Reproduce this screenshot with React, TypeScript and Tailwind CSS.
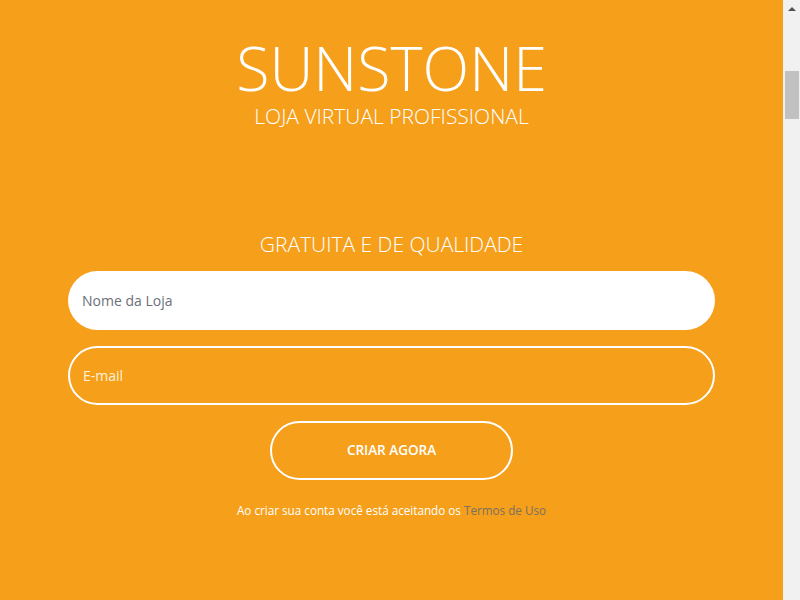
export default function App() {
  return (
    <div className="flex h-[600px] w-[800px] overflow-hidden bg-[#f59f1b] font-['Open_Sans',sans-serif]">
      <main className="flex flex-1 flex-col items-center text-white">
        <h1 className="mt-[35px] text-[61px] font-light leading-[66px]">SUNSTONE</h1>
        <p className="mt-[2px] text-[21px] font-light leading-[26px]">LOJA VIRTUAL PROFISSIONAL</p>

        <h2 className="mt-[102px] text-[21px] font-light leading-[26px]">GRATUITA E DE QUALIDADE</h2>

        <form className="mt-[14px] flex w-[647px] flex-col items-center gap-4" onSubmit={(e) => e.preventDefault()}>
          <input
            placeholder="Nome da Loja"
            className="h-[59px] w-full rounded-full bg-white px-[14px] text-[14px] text-gray-700 outline-none placeholder:text-[#6b6f7a]"
          />
          <input
            placeholder="E-mail"
            className="h-[59px] w-full rounded-full border-2 border-white bg-transparent px-[13px] text-[14px] text-white outline-none placeholder:text-[#fdf3dc]"
          />
          <button
            type="submit"
            className="h-[59px] w-[243px] rounded-full border-2 border-white text-[13.5px] font-semibold text-white"
          >
            CRIAR AGORA
          </button>
        </form>

        <p className="mt-[22px] text-[11.7px] leading-4">
          Ao criar sua conta você está aceitando os <a className="text-[#7a7060]">Termos de Uso</a>
        </p>
      </main>

      {/* fake browser scrollbar */}
      <div className="flex w-[17px] flex-col items-center bg-[#f1f1f1]">
        <div className="flex h-[17px] items-center justify-center">
          <div className="h-0 w-0 border-x-[4px] border-b-[4px] border-x-transparent border-b-[#505050]" />
        </div>
        <div className="mt-[54px] h-[48px] w-[14px] bg-[#c1c1c1]" />
      </div>
    </div>
  );
}
